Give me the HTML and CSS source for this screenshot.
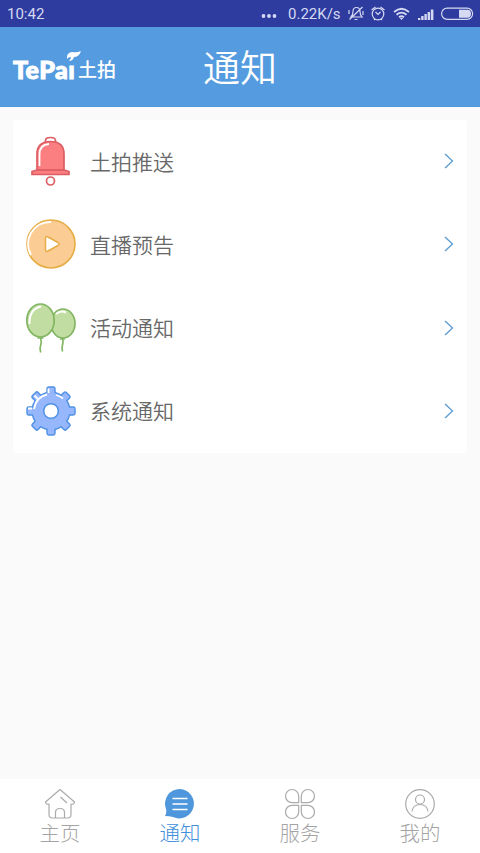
FILE: index.html
```html
<!DOCTYPE html>
<html lang="zh-CN">
<head>
<meta charset="utf-8">
<title>通知</title>
<link rel="stylesheet" href="styles.css">
</head>
<body>
<div class="status">
  <span class="time">10:42</span>
  <svg class="dots" width="16" height="6" viewBox="0 0 16 6"><circle cx="2.500" cy="3" r="1.900"/><circle cx="8" cy="3" r="1.900"/><circle cx="13.500" cy="3" r="1.900"/></svg>
  <span class="speed">0.22K/s</span>
  <svg class="status-icons" width="128" height="20" viewBox="346 4 128 20">
    <g class="line">
      <path d="M351 17q2-2 2-5.500q0-4 3.500-4t3.500 4q0 3.500 2 5.500zM354.500 19.500h3M349.500 19.500L362.500 7M349 10v4M363 11v4"/>
      <circle cx="378" cy="14" r="5.800"/><path d="M375.500 12l2.500 2.500l2.500-2.500M371.500 10l4-3M384.500 10l-4-3M374 20l1-1M382 20l-1-1"/>
      <path class="wifi" d="M394 12q7.500-6.500 15 0M396.500 14.700q5-4.200 10 0M399 17.200q2.500-2 5 0"/>
      <rect x="441.600" y="8.100" width="31" height="11.300" rx="5.600"/>
    </g>
    <path class="solid" d="M399.700 18h3.600l-1.800 2zM418 18h2.400v2H418zM421.200 16h2.400v4h-2.400zM424.400 14h2.400v6h-2.400zM427.600 12h2.400v8h-2.400zM430.800 9.500h2.600V20h-2.600zM459 9.700h8.500q3.500 0 3.500 4T467.500 17.800h-8.500z"/>
  </svg>
</div>
<header class="header">
  <div class="logo">
    <span class="logo-latin">TePaı</span>
    <svg class="leaf" width="16" height="11" viewBox="0 0 16 11"><path d="M1 8Q0 2 6 1Q11 2 15 0Q13 6 8 6Q7 10 3 10Q5 8 5 6Q2 6 1 8Z"/></svg>
    <span class="logo-cn">土拍</span>
  </div>
  <h1 class="title">通知</h1>
</header>
<main class="content">
  <ul class="card">
    <li class="row">
      <svg class="icon" viewBox="0 0 52 52">
        <g fill="#fff" stroke="#dd5d63" stroke-width="1.700" stroke-linejoin="round">
          <path d="M20.500 7V5.500q0-3 5-3t5 3V7"/>
          <path fill="#fb7f80" d="M12 35V19Q12 6.500 25.500 6.500T39 19V35L44 36.500V39.500H7V36.500Z"/>
          <path d="M12 35H39"/><circle cx="25.500" cy="46" r="4"/>
        </g>
        <path d="M14.500 31V19.500Q14.500 9.500 24 9" fill="none" stroke="#fff" stroke-width="1.800"/>
      </svg>
      <span class="label">土拍推送</span>
      <svg class="arrow" viewBox="0 0 10 16"><path d="M1 1l7.500 7L1 15"/></svg>
    </li>
    <li class="row">
      <svg class="icon" viewBox="0 0 52 52">
        <circle cx="26" cy="26" r="24" fill="#fbcd94" stroke="#e7ad45" stroke-width="1.700"/>
        <path d="M6 37A22 22 0 0 1 26 4" fill="none" stroke="#fff" stroke-width="2"/>
        <path d="M20.500 20.500q0-3 2.500-1.500l10 5.500q2 1.500 0 3l-10 5.500q-2.500 1.500-2.500-1.500z" fill="#fff" stroke="#e7ad45" stroke-width="1.500"/>
      </svg>
      <span class="label">直播预告</span>
      <svg class="arrow" viewBox="0 0 10 16"><path d="M1 1l7.500 7L1 15"/></svg>
    </li>
    <li class="row">
      <svg class="icon" viewBox="0 0 52 52">
        <g fill="#c1dda2" stroke="#83b663" stroke-width="1.700">
          <ellipse cx="38" cy="21.500" rx="12" ry="14.500"/>
          <path d="M35 37h5M37.500 36q1 4 0 7q-1 3 0 6.500" fill="none"/>
          <ellipse cx="15.500" cy="18.500" rx="13.700" ry="16.500"/>
          <path d="M12.500 36h6M15.500 35q1.500 5 0 9q-1 3 .2 6.500" fill="none"/>
        </g>
        <path d="M4.500 22Q4 7 16 4.500M31 12q4.500-4 10-1.500" fill="none" stroke="#fff" stroke-width="2"/>
      </svg>
      <span class="label">活动通知</span>
      <svg class="arrow" viewBox="0 0 10 16"><path d="M1 1l7.500 7L1 15"/></svg>
    </li>
    <li class="row">
      <svg class="icon" viewBox="0 0 52 52">
        <defs><g id="gear"><circle cx="26" cy="26" r="18.200"/><g id="teeth"><rect x="22.700" y="2.700" width="6.600" height="46.600" rx="1"/><rect x="2.700" y="22.700" width="46.600" height="6.600" rx="1"/></g><use href="#teeth" transform="rotate(45 26 26)"/></g></defs>
        <use href="#gear" fill="#4f91e4" stroke="#4f91e4" stroke-width="2.800" stroke-linejoin="round"/>
        <use href="#gear" fill="#96b7fb"/>
        <path d="M9 24Q11 12 22 9.500M31 10q4 1 7 3.500M23.500 3.500V8M9.500 10.500l3 3M3 23.500h4" fill="none" stroke="#fff" stroke-width="1.800"/>
        <circle cx="26" cy="26" r="7.300" fill="#fff" stroke="#4f91e4" stroke-width="1.500"/>
      </svg>
      <span class="label">系统通知</span>
      <svg class="arrow" viewBox="0 0 10 16"><path d="M1 1l7.500 7L1 15"/></svg>
    </li>
  </ul>
</main>
<nav class="tabs">
  <div class="tab">
    <svg class="tab-icon" viewBox="0 0 32 32"><path d="M16 1.500L1.500 14Q2 17 5 16V26.500Q5 30 8.500 30H23.500Q27 30 27 26.500V16Q30 17 30.500 14ZM11.500 30V24.500Q11.500 20.500 16 20.500T20.500 24.500V30M16.500 9l6.500 6"/></svg>
    <span>主页</span>
  </div>
  <div class="tab active">
    <svg class="tab-icon" viewBox="0 0 32 32"><path class="bubble" d="M16 1A14.700 14.700 0 1 1 9 29Q5 28 1 28Q3 25 2 21A14.700 14.700 0 0 1 16 1Z"/><path class="bubble-lines" d="M8.500 10.500h15M8.500 16h15M8.500 21.500h15"/></svg>
    <span>通知</span>
  </div>
  <div class="tab">
    <svg class="tab-icon" viewBox="0 0 32 32"><path d="M14.700 14.700H8A6.600 6.600 0 1 1 14.700 8ZM17.300 14.700H24A6.600 6.600 0 1 0 17.300 8ZM14.700 17.300H8A6.600 6.600 0 1 0 14.700 24ZM17.300 17.300H24A6.600 6.600 0 1 1 17.300 24Z"/></svg>
    <span>服务</span>
  </div>
  <div class="tab">
    <svg class="tab-icon" viewBox="0 0 32 32"><circle cx="16" cy="16" r="14.300"/><circle cx="16" cy="11.500" r="4.500"/><path d="M8 23.500Q9 16.500 16 16.500T24 23.500"/></svg>
    <span>我的</span>
  </div>
</nav>
</body>
</html>
```
FILE: styles.css
```css
* { box-sizing: border-box; }
body {
  margin: 0;
  height: 853px;
  display: flex;
  flex-direction: column;
  overflow: hidden;
  background: #fafafa;
  font-family: Roboto, "Noto Sans CJK SC", sans-serif;
  font-weight: 300;
}
svg { display: block; flex: none; }
.status {
  height: 27px;
  flex: none;
  display: flex;
  align-items: center;
  padding: 0 6px 0 7px;
  background: #2e3c9f;
  color: #d5d9f2;
  font-size: 15px;
  font-weight: 400;
}
.time { margin-right: auto; }
.dots { fill: #d5d9f2; margin: 5px 11px 0 0; }
.speed { width: 53px; margin-right: 5px; white-space: nowrap; }
.line { fill: none; stroke: #d5d9f2; stroke-width: 1.2; }
.line .wifi { stroke-width: 1.8; }
.solid { fill: #d5d9f2; }
.header {
  height: 80px;
  flex: none;
  display: grid;
  grid-template-columns: 1fr auto 1fr;
  align-items: center;
  padding: 0 13px;
  background: #559be0;
  color: #fff;
  border-bottom: 1px solid #4f93da;
}
.logo { position: relative; display: flex; align-items: center; padding-top: 4px; }
.logo-latin {
  width: 65px;
  font: 900 25px/28px Lato, sans-serif;
  letter-spacing: .5px;
  -webkit-text-stroke: 1px #fff;
}
.leaf { position: absolute; left: 53px; top: 3px; fill: #fff; }
.logo-cn { padding-top: 5px; font-size: 19px; line-height: 28px; font-weight: 500; white-space: nowrap; }
.title { margin: 0; padding-top: 6px; font-size: 37px; line-height: 50px; font-weight: 350; }
.content { flex: 1; padding: 13px; }
.card {
  margin: 0;
  padding: 0;
  list-style: none;
  height: 333px;
  display: grid;
  grid-template-rows: repeat(4, 1fr);
  background: #fff;
  border-radius: 3px;
}
.row { display: flex; align-items: center; padding: 0 13px 1px 12px; }
.icon { width: 52px; height: 52px; }
.label { flex: 1; margin-left: 13px; padding-bottom: 1px; font-size: 21px; color: #686868; font-weight: 350; }
.arrow { width: 10px; height: 16px; fill: none; stroke: #5b9bd2; stroke-width: 1.3; }
.tabs {
  height: 74px;
  flex: none;
  display: grid;
  grid-template-columns: repeat(4, 1fr);
  background: #fff;
}
.tab {
  display: flex;
  flex-direction: column;
  align-items: center;
  padding-top: 9px;
  color: #a4a4a4;
  font-size: 20.5px;
  line-height: 29px;
}
.tab-icon { width: 32px; height: 32px; fill: none; stroke: #aaa; stroke-width: 1.2; stroke-linejoin: round; }
.active { color: #3f8fdb; }
.tab-icon .bubble { fill: #4e97dc; stroke: none; }
.tab-icon .bubble-lines { stroke: #fff; stroke-width: 1.3; }
```
